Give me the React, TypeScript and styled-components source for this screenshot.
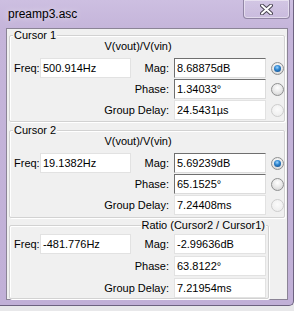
import React from "react";
import styled, { createGlobalStyle, css } from "styled-components";

const Global = createGlobalStyle`
  html, body { margin: 0; padding: 0; background: #e8e8ea; overflow: hidden; }
  * { box-sizing: border-box; }
  #root { width: 294px; height: 311px; }
`;

const Window = styled.div`
  width: 294px;
  height: 306px;
  display: flex;
  flex-direction: column;
  background: linear-gradient(#cdbfe1 0px, #c5b5da 28px, #c1b0d7 100%);
  border-right: 1px solid #6d6280;
  border-bottom: 1px solid #6d6280;
  border-bottom-right-radius: 5px;
  font-family: "Liberation Sans", Arial, sans-serif;
`;

const TitleBar = styled.div`
  height: 28px;
  flex: none;
  display: flex;
  align-items: flex-start;
  padding: 0 3px 0 8px;
`;

const Title = styled.div`
  margin-top: 7px;
  font-size: 12px;
  line-height: 14px;
  color: #000;
  text-shadow: 0 0 6px rgba(255, 255, 255, 0.7);
`;

const CloseButton = styled.div`
  margin-left: auto;
  width: 47px;
  height: 19px;
  display: flex;
  align-items: center;
  justify-content: center;
  border: 1px solid rgba(95, 85, 115, 0.55);
  border-top: none;
  border-bottom-left-radius: 4px;
  border-bottom-right-radius: 4px;
  box-shadow: inset 0 0 0 1px rgba(255, 255, 255, 0.45);
  background: linear-gradient(rgba(255, 255, 255, 0.12), rgba(255, 255, 255, 0.05));
`;

const Client = styled.div`
  flex: 1;
  margin: 0 5px 5px 6px;
  border: 1px solid #8b8496;
  background: #f0f0f0;
  display: flex;
  flex-direction: column;
  padding: 0 2px;
`;

const GroupBox = styled.div<{ $top: number; $width?: number; $padTop: number; $padBottom: number }>`
  position: relative;
  margin-top: ${(p) => p.$top}px;
  width: ${(p) => (p.$width ? `${p.$width}px` : "auto")};
  border: 1px solid #d2d2d2;
  border-radius: 2px;
  box-shadow: 1px 1px 0 #ffffff, inset 1px 1px 0 #ffffff;
  padding: ${(p) => p.$padTop}px 0 ${(p) => p.$padBottom}px 0;
`;

const Caption = styled.span<{ $right?: boolean }>`
  position: absolute;
  top: -7px;
  ${(p) => (p.$right ? css`right: 2px;` : css`left: 3px;`)}
  padding: 0 1px;
  background: #f0f0f0;
  font-size: 11px;
  line-height: 12px;
  color: #000;
`;

const Grid = styled.div<{ $gap: number; $head?: number }>`
  display: grid;
  grid-template-columns: 30px 91px 43px 92px 18px;
  ${(p) => (p.$head ? css`grid-template-rows: ${p.$head}px;` : "")}
  grid-auto-rows: 20px;
  row-gap: ${(p) => p.$gap}px;
  font-size: 11px;
  color: #000;
`;

const Heading = styled.div`
  grid-column: 1 / -1;
  padding-right: 18px;
  text-align: center;
  line-height: 12px;
  align-self: start;
`;

const Label = styled.div<{ $span?: string }>`
  grid-column: ${(p) => p.$span || "auto"};
  display: flex;
  align-items: center;
  justify-content: flex-end;
  padding-right: 5px;
  white-space: nowrap;
`;

const LeftLabel = styled(Label)`
  justify-content: flex-start;
  padding-right: 0;
  padding-left: 4px;
`;

const Field = styled.div<{ $col: number; $editable?: boolean }>`
  grid-column: ${(p) => p.$col};
  display: flex;
  align-items: center;
  padding-left: 2px;
  background: #ffffff;
  border: 1px solid #e2e2e2;
  white-space: nowrap;
  ${(p) =>
    p.$editable &&
    css`
      border-top-color: #6f6f6f;
      border-left-color: #6f6f6f;
      border-right-color: #dcdcdc;
      border-bottom-color: #dcdcdc;
    `}
`;

const Radio = styled.span<{ $checked?: boolean; $disabled?: boolean }>`
  grid-column: 5;
  align-self: center;
  margin-left: 5px;
  width: 13px;
  height: 13px;
  border-radius: 50%;
  border: 1px solid ${(p) => (p.$disabled ? "#cdcdcd" : "#8f9091")};
  background: ${(p) =>
    p.$disabled
      ? "radial-gradient(circle at 50% 40%, #fbfbfb 0, #efefef 70%)"
      : "radial-gradient(circle at 50% 35%, #ffffff 0, #e6e6e6 55%, #cbcbcb 100%)"};
  display: flex;
  align-items: center;
  justify-content: center;
  &::after {
    content: "";
    display: ${(p) => (p.$checked ? "block" : "none")};
    width: 7px;
    height: 7px;
    border-radius: 50%;
    background: radial-gradient(circle at 45% 35%, #9fd6ff 0, #2f86d0 40%, #0b3f7a 100%);
  }
`;

const CloseIcon = () => (
  <svg width="13" height="11" viewBox="0 0 13 11">
    <path d="M2 1.5 L11 9.5 M11 1.5 L2 9.5" stroke="#4a4553" strokeWidth="4" strokeLinecap="round" />
    <path d="M2 1.5 L11 9.5 M11 1.5 L2 9.5" stroke="#ffffff" strokeWidth="2" strokeLinecap="round" />
  </svg>
);

type CursorData = { freq: string; mag: string; phase: string; delay: string };

const CursorGroup = ({
  name,
  top,
  padBottom,
  data,
}: {
  name: string;
  top: number;
  padBottom: number;
  data: CursorData;
}) => (
  <GroupBox $top={top} $padTop={4} $padBottom={padBottom}>
    <Caption>{name}</Caption>
    <Grid $gap={1} $head={17}>
      <Heading>V(vout)/V(vin)</Heading>
      <LeftLabel>Freq:</LeftLabel>
      <Field $col={2}>{data.freq}</Field>
      <Label>Mag:</Label>
      <Field $col={4} $editable>
        {data.mag}
      </Field>
      <Radio $checked />
      <Label $span="1 / 4">Phase:</Label>
      <Field $col={4} $editable>
        {data.phase}
      </Field>
      <Radio />
      <Label $span="1 / 4">Group Delay:</Label>
      <Field $col={4}>{data.delay}</Field>
      <Radio $disabled />
    </Grid>
  </GroupBox>
);

const c1: CursorData = { freq: "500.914Hz", mag: "8.68875dB", phase: "1.34033°", delay: "24.5431µs" };
const c2: CursorData = { freq: "19.1382Hz", mag: "5.69239dB", phase: "65.1525°", delay: "7.24408ms" };

export default function App() {
  return (
    <>
      <Global />
      <Window>
        <TitleBar>
          <Title>preamp3.asc</Title>
          <CloseButton>
            <CloseIcon />
          </CloseButton>
        </TitleBar>
        <Client>
          <CursorGroup name="Cursor 1" top={6} padBottom={1} data={c1} />
          <CursorGroup name="Cursor 2" top={8} padBottom={2} data={c2} />
          <GroupBox $top={7} $width={260} $padTop={8} $padBottom={0}>
            <Caption $right>Ratio (Cursor2 / Cursor1)</Caption>
            <Grid $gap={2}>
              <LeftLabel>Freq:</LeftLabel>
              <Field $col={2}>-481.776Hz</Field>
              <Label>Mag:</Label>
              <Field $col={4}>-2.99636dB</Field>
              <Label $span="1 / 4">Phase:</Label>
              <Field $col={4}>63.8122°</Field>
              <Label $span="1 / 4">Group Delay:</Label>
              <Field $col={4}>7.21954ms</Field>
            </Grid>
          </GroupBox>
        </Client>
      </Window>
    </>
  );
}
